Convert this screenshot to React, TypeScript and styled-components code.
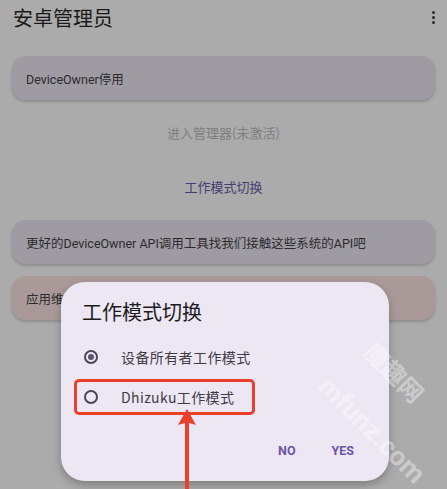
import styled, { createGlobalStyle } from 'styled-components';

const GlobalStyle = createGlobalStyle`
  html, body {
    margin: 0;
    padding: 0;
    background: #ababab;
  }
  body {
    font-family: Roboto, "Noto Sans CJK SC", sans-serif;
  }
`;

const options = ['设备所有者工作模式', 'Dhizuku工作模式'];

function App() {
  return (
    <Screen>
      <GlobalStyle />
      <TopBar>
        <AppTitle>安卓管理员</AppTitle>
        <Kebab>
          <span />
          <span />
          <span />
        </Kebab>
      </TopBar>

      <Content>
        <Card>DeviceOwner停用</Card>
        <LinkGroup>
          <TextAction muted>进入管理器(未激活)</TextAction>
          <TextAction>工作模式切换</TextAction>
        </LinkGroup>
        <Card>更好的DeviceOwner API调用工具找我们接触这些系统的API吧</Card>
        <Card tone="warn">应用维护</Card>
      </Content>

      <Dialog>
        <DialogTitle>工作模式切换</DialogTitle>
        <OptionList>
          {options.map((label, i) => (
            <Option key={label} highlighted={i === 1}>
              <Radio checked={i === 0} />
              <OptionLabel>{label}</OptionLabel>
            </Option>
          ))}
        </OptionList>
        <Actions>
          <DialogButton>NO</DialogButton>
          <DialogButton>YES</DialogButton>
        </Actions>
      </Dialog>

      <Arrow width="24" height="80" viewBox="0 0 24 80">
        <polygon points="12,0 3,16 10,14 10,80 14,80 14,14 21,16" fill="#e8402a" />
      </Arrow>

      <Watermark>
        <WaterCn>魔趣网</WaterCn>
        <WaterEn>mfunz.com</WaterEn>
      </Watermark>
    </Screen>
  );
}

const Screen = styled.div`
  position: relative;
  width: 447px;
  height: 489px;
  overflow: hidden;
  background: #ababab;
`;

const TopBar = styled.div`
  display: flex;
  align-items: center;
  justify-content: space-between;
  height: 35px;
  padding: 0 12px 0 13px;
`;

const AppTitle = styled.h1`
  margin: 0;
  font-family: "Noto Sans CJK SC", sans-serif;
  font-size: 20px;
  font-weight: 400;
  color: #1a1a1a;
`;

const Kebab = styled.div`
  display: flex;
  flex-direction: column;
  gap: 2px;

  span {
    width: 3px;
    height: 3px;
    border-radius: 50%;
    background: #2a2a2a;
  }
`;

const Content = styled.div`
  display: flex;
  flex-direction: column;
  padding: 21px 12px 0;
`;

const Card = styled.div<{ tone?: 'warn' }>`
  display: flex;
  align-items: center;
  height: 44px;
  padding: 0 14px;
  margin-bottom: 12px;
  border-radius: 14px;
  background: ${p => (p.tone === 'warn' ? '#a99a99' : '#9f9ba3')};
  box-shadow: 0 2px 3px rgba(0, 0, 0, 0.18);
  font-family: Roboto, "Noto Sans CJK SC", sans-serif;
  font-size: 12.5px;
  color: #2c2a2e;
  white-space: nowrap;
  overflow: hidden;
`;

const LinkGroup = styled.div`
  display: flex;
  flex-direction: column;
  align-items: center;
  gap: 36px;
  padding: 12px 0 24px;
`;

const TextAction = styled.div<{ muted?: boolean }>`
  line-height: 18px;
  font-family: "Noto Sans CJK SC", sans-serif;
  font-size: 13px;
  color: ${p => (p.muted ? '#7f7e82' : '#463d73')};
`;

const Dialog = styled.div`
  position: absolute;
  left: 61px;
  top: 282px;
  width: 328px;
  height: 199px;
  box-sizing: border-box;
  padding: 17px 20px 0 21px;
  border-radius: 24px;
  background: #ede7f4;
  box-shadow: 0 4px 8px rgba(0, 0, 0, 0.25);
  display: flex;
  flex-direction: column;
`;

const DialogTitle = styled.div`
  font-family: "Noto Sans CJK SC", sans-serif;
  font-size: 20px;
  color: #1d1b20;
  line-height: 26px;
`;

const OptionList = styled.div`
  display: flex;
  flex-direction: column;
  margin-top: 14px;
  gap: 4px;
`;

const Option = styled.div<{ highlighted?: boolean }>`
  display: flex;
  align-items: center;
  width: 181px;
  height: 36px;
  box-sizing: border-box;
  margin-left: -8px;
  padding-left: 8px;
  border: 3px solid ${p => (p.highlighted ? '#e8402a' : 'transparent')};
  border-radius: 5px;
`;

const Radio = styled.span<{ checked?: boolean }>`
  position: relative;
  width: 14px;
  height: 14px;
  box-sizing: border-box;
  border: 2px solid #4a4654;
  border-radius: 50%;
  margin-left: -1px;

  &::after {
    content: '';
    display: ${p => (p.checked ? 'block' : 'none')};
    position: absolute;
    inset: 2px;
    border-radius: 50%;
    background: #5b5270;
  }
`;

const OptionLabel = styled.span`
  margin-left: 23px;
  font-family: "Noto Sans CJK SC", sans-serif;
  font-size: 14px;
  letter-spacing: 0.4px;
  color: #3f3b45;
`;

const Actions = styled.div`
  display: flex;
  justify-content: flex-end;
  gap: 36px;
  margin-top: 28px;
  padding-right: 15px;
`;

const DialogButton = styled.span`
  font-family: Roboto, sans-serif;
  font-size: 12.5px;
  font-weight: 700;
  color: #6a55ab;
`;

const Arrow = styled.svg`
  position: absolute;
  left: 175px;
  top: 409px;
`;

const Watermark = styled.div`
  position: absolute;
  left: 306px;
  top: 336px;
  width: 170px;
  height: 150px;
  pointer-events: none;
  transform: rotate(45deg);
  color: rgba(255, 255, 255, 0.4);
  font-weight: 700;
  display: flex;
  flex-direction: column;
  align-items: center;
  justify-content: center;
  gap: 28px;
`;

const WaterCn = styled.div`
  font-family: "Noto Sans CJK SC", sans-serif;
  font-size: 24px;
  line-height: 26px;
  margin-right: 50px;
`;

const WaterEn = styled.div`
  font-family: Roboto, sans-serif;
  font-size: 27px;
  line-height: 32px;
`;

export default App;
